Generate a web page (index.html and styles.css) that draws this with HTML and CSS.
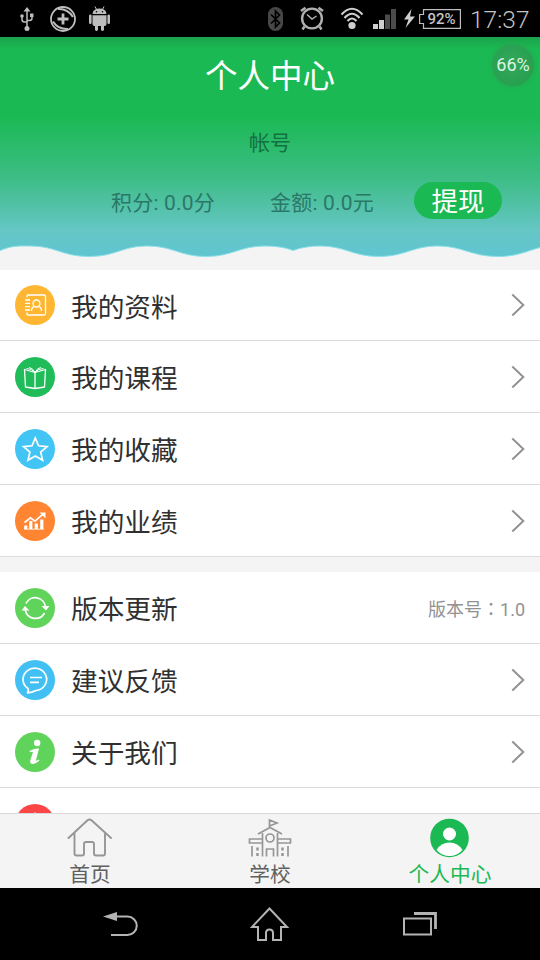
FILE: index.html
```
<!DOCTYPE html>
<html lang="zh-CN">
<head>
<meta charset="utf-8">
<title>个人中心</title>
<link rel="stylesheet" href="styles.css">
</head>
<body>
<div class="screen">
  <div class="status">
    <svg class="usb" width="14" height="24" viewBox="0 0 14 24" fill="none" stroke="#bdbdbd" stroke-width="1.5"><path d="M7 3v18M2 9v3.500Q2 15 4.500 15H7M12 8v3Q12 13.500 9.500 13.500H7"/><path d="M7 0l3.500 4.500h-7z" fill="#bdbdbd" stroke="none"/><circle cx="7" cy="21.500" r="2.500" fill="#bdbdbd" stroke="none"/><circle cx="2" cy="9" r="1.800" fill="#bdbdbd" stroke="none"/><path d="M10 6.500h3.500V10H10z" fill="#bdbdbd" stroke="none"/></svg>
    <svg class="plus" width="26" height="26" viewBox="0 0 26 26" fill="none" stroke="#bdbdbd"><circle cx="13" cy="13" r="12" stroke-width="1.800"/><path d="M8 3Q18 2.500 23 11M3 15.500Q8 23.500 18 23" stroke-width="2"/><path d="M13 7.500v11M7.500 13h11" stroke-width="2.800"/></svg>
    <svg class="droid" width="21" height="25" viewBox="0 0 21 25" fill="#bdbdbd"><path d="M3.500 8Q4 2.500 10.500 2.500T17.500 8zM3.500 9.200h14V18Q17.500 20 15.500 20H5.500Q3.500 20 3.500 18z"/><path d="M6 .5l1.500 3M15 .5l-1.500 3" stroke="#bdbdbd"/><rect x="0" y="8.500" width="2.600" height="9.500" rx="1.300"/><rect x="18.400" y="8.500" width="2.600" height="9.500" rx="1.300"/><rect x="6" y="18" width="3" height="7" rx="1.400"/><rect x="12" y="18" width="3" height="7" rx="1.400"/><circle cx="7.500" cy="5.700" r=".8" fill="#000"/><circle cx="13.500" cy="5.700" r=".8" fill="#000"/></svg>
    <svg class="bt" width="15" height="24" viewBox="0 0 15 24"><rect width="15" height="24" rx="7.500" fill="#474747"/><path d="M3 7.500l8.500 8.500-4 4V4l4 4L3 16.500" fill="none" stroke="#000" stroke-width="1.700"/></svg>
    <svg class="alarm" width="24" height="25" viewBox="0 0 24 25" fill="none" stroke="#b0b0b0"><circle cx="12" cy="12.500" r="9.900" stroke-width="2.400"/><path d="M7 8.500l5 4.500 4.500-3" stroke-width="1.500"/><path d="M1 5L5.500 1.800M18.500 1.800L23 5M4.500 20.500l-2 3M19.500 20.500l2 3" stroke-width="2.500"/></svg>
    <svg class="wifi" width="24" height="23" viewBox="0 0 24 23" fill="none" stroke="#cfcfcf" stroke-width="2.200"><path d="M1.500 7.500Q12-4 22.500 7.500M4.500 11Q12 2.500 19.500 11M7.500 14Q12 9 16.500 14"/><circle cx="12" cy="18.500" r="3.600" fill="#cfcfcf" stroke="none"/></svg>
    <svg class="signal" width="24" height="20" viewBox="0 0 24 20"><path d="M0 15h5v5H0zM6 11h5v9H6z" fill="#cfcfcf"/><path d="M12 5.500h5V20h-5zM18 0h5v20h-5z" fill="#4b4b4b"/></svg>
    <svg class="bolt" width="11" height="19" viewBox="0 0 11 19" fill="#cfcfcf"><path d="M7.500 0L0 10.500h4.500L1.500 19 11 7.500H6z"/></svg>
    <div class="battery"><svg width="42" height="20" viewBox="0 0 42 20" fill="none" stroke="#bdbdbd" stroke-width="1.200"><path d="M4.500.6h36.900v18.800H4.500V14.500H.6v-9h3.900z"/></svg><span>92%</span></div>
    <span class="clock">17:37</span>
  </div>

  <div class="header">
    <h1>个人中心</h1>
    <div class="account">帐号</div>
    <div class="stats">
      <span class="points">积分: 0.0分</span>
      <span class="amount">金额: 0.0元</span>
      <span class="withdraw">提现</span>
    </div>
    <svg class="wave" width="540" height="26" viewBox="0 0 540 26"><path d="M-2 7.500C12 1 20 2 30 2C56 2 62 12.500 89 12.500S122 2 147 2C173 2 180 12.500 206 12.500S240 2 265 2Q282 2 293 6.500Q305 2 320 2C345 2 353 12.500 379 12.500S413 2 437 2C463 2 471 12.500 498 12.500C518 12.500 526 7 542 3V28H-2z" fill="#f4f4f4" stroke="#8be0e8" stroke-width="1"/></svg>
    <div class="bubble">66%</div>
  </div>

  <div class="list">
    <div class="row first">
      <svg class="ico" viewBox="0 0 40 40" fill="none" stroke="#fff"><circle cx="20" cy="20" r="20" fill="#ffb733" stroke="none"/><g stroke-width="1.300"><path d="M12 12.500v-1.500q0-1 1-1h16q1.500 0 1.500 1.500v17q0 1.500-1.500 1.500H13q-1 0-1-1v-1.500M10 15h5M10 18.300h5M10 21.600h5M10 25h5"/><circle cx="21.500" cy="18.500" r="3.500"/><path d="M16.500 26q0-4 3-4.700M26.500 26q0-4-3-4.700"/></g></svg>
      <span class="label">我的资料</span><svg class="arrow" viewBox="0 0 14 24"><path d="M1.300 1.500L12.300 12 1.300 22.500"/></svg>
    </div>
    <div class="row">
      <svg class="ico" viewBox="0 0 40 40" fill="none" stroke="#fff"><circle cx="20" cy="20" r="20" fill="#1fbc59" stroke="none"/><g stroke-width="1.300" stroke-linejoin="round"><path d="M20 15.500v16M20 15.500l-10.500-3 1 17.500L20 31.500l9.500-1.500 1-17.500z"/><path d="M20 15.500Q16.500 11.500 11.500 11.500M20 15.500Q17.500 10.500 14 10.500M20 15.500Q23.500 11.500 28.500 11.500M20 15.500Q22.500 10.500 26 10.500" stroke-width="1"/></g></svg>
      <span class="label">我的课程</span><svg class="arrow" viewBox="0 0 14 24"><path d="M1.300 1.500L12.300 12 1.300 22.500"/></svg>
    </div>
    <div class="row">
      <svg class="ico" viewBox="0 0 40 40"><circle cx="20" cy="20" r="20" fill="#42c5f5"/><path d="M20.300 9l3.300 7.800 8.400.8-6.300 5.500 1.900 8.200-7.300-4.300-7.300 4.300 1.900-8.200-6.300-5.500 8.400-.8z" fill="none" stroke="#fff" stroke-width="1.700"/></svg>
      <span class="label">我的收藏</span><svg class="arrow" viewBox="0 0 14 24"><path d="M1.300 1.500L12.300 12 1.300 22.500"/></svg>
    </div>
    <div class="row">
      <svg class="ico" viewBox="0 0 40 40" fill="none" stroke="#fff"><circle cx="20" cy="20" r="20" fill="#ff8533" stroke="none"/><path d="M9.500 21.500l6-4.700 4.500 3.400 8-7" stroke-width="1.700"/><path d="M24.500 11.500h6v6z" fill="#fff" stroke="none"/><path d="M10.800 28v-3.500M15.800 28v-8M21.300 28v-5.500M26.800 28V18.500" stroke-width="3.200"/><path d="M9 28.200h20" stroke-width=".8"/></svg>
      <span class="label">我的业绩</span><svg class="arrow" viewBox="0 0 14 24"><path d="M1.300 1.500L12.300 12 1.300 22.500"/></svg>
    </div>
  </div>

  <div class="list more">
    <div class="row">
      <svg class="ico" viewBox="0 0 40 40" fill="none" stroke="#fff" stroke-width="1.700"><circle cx="20" cy="20" r="20" fill="#5fd35a" stroke="none"/><path d="M11 15.500A10.300 10.300 0 0 1 30.500 19M29.500 25A10.300 10.300 0 0 1 10.300 22"/><path d="M26.500 18H34.500L31 22.500zM6.500 22.500l3.500-4.500 4.500 4.500z" fill="#fff" stroke="none"/></svg>
      <span class="label">版本更新</span><span class="version">版本号<span class="colon" lang="zh-TW">：</span>1.0</span>
    </div>
    <div class="row">
      <svg class="ico" viewBox="0 0 40 40" fill="none" stroke="#fff" stroke-width="1.700"><circle cx="20" cy="20" r="20" fill="#42c0f4" stroke="none"/><path d="M13 28.500A11.800 11.200 0 1 1 21 30.500Q17 32.500 12.500 33Q14 30.500 13 28.500zM15 17.500h12M15 22.300h9" stroke-linejoin="round"/></svg>
      <span class="label">建议反馈</span><svg class="arrow" viewBox="0 0 14 24"><path d="M1.300 1.500L12.300 12 1.300 22.500"/></svg>
    </div>
    <div class="row">
      <svg class="ico" viewBox="0 0 40 40"><circle cx="20" cy="20" r="20" fill="#5fd35a"/><circle cx="22.200" cy="11" r="3.200" fill="#fff"/><path d="M14.500 19Q19 16 24 16.500L21 28Q20.800 29.500 23.800 27.500L24.500 28.500Q20 32.500 17 32Q14.500 31.500 15.400 28L17.800 20.500Q18.300 19 15 20.200z" fill="#fff"/></svg>
      <span class="label">关于我们</span><svg class="arrow" viewBox="0 0 14 24"><path d="M1.300 1.500L12.300 12 1.300 22.500"/></svg>
    </div>
    <div class="row">
      <svg class="ico" viewBox="0 0 40 40" fill="none" stroke="#fff" stroke-width="1.600"><circle cx="20" cy="20" r="20" fill="#fa4646" stroke="none"/><path d="M20 8.500v11M14 12a10 10 0 1 0 12 0"/></svg>
    </div>
  </div>

  <div class="tabs">
    <div class="tab">
      <svg width="46" height="40" viewBox="0 0 46 40" fill="none" stroke="#969696" stroke-width="1.900" stroke-linecap="round" stroke-linejoin="round"><path d="M1.500 20L20.500 2.300Q22.500.8 24.500 2.300L44 20M7.500 15v20.500q0 2 2 2h5.500q2 0 2-2V26q0-2 2-2h6q2 0 2 2v9.500q0 2 2 2h7q2 0 2-2V15"/></svg>
      <span>首页</span>
    </div>
    <div class="tab">
      <svg width="46" height="40" viewBox="0 0 46 40" fill="none" stroke="#969696" stroke-width="1.700"><path d="M22.500 10V2l7.500 3-7.500 3M11 16L23 9.500 35 16M15.500 15v23.500M30.500 15v23.500M15.500 21h-13v4h13M30.500 21h13v4h-13M5 28v10.500M41 28v10.500M19.500 38.500V31h7v7.500"/><circle cx="23" cy="20" r="4"/><path d="M10.500 29.500v9M35.500 29.500v9" stroke-width="2.500" stroke-dasharray="3 2.500"/></svg>
      <span>学校</span>
    </div>
    <div class="tab active">
      <svg width="46" height="40" viewBox="0 0 46 40"><circle cx="22.500" cy="20" r="19.300" fill="#1ab953"/><circle cx="22.500" cy="16" r="6.500" fill="#fff"/><path d="M9.500 32Q14 24.500 22.500 24.500T35.500 32Q30 38 22.500 38T9.500 32z" fill="#fff"/></svg>
      <span>个人中心</span>
    </div>
  </div>

  <div class="nav">
    <svg width="36" height="36" viewBox="0 0 36 36" fill="none" stroke="#b4b4b4" stroke-width="2"><path d="M13 10.500h12.500a9 9 0 0 1 0 18.500H9"/><path d="M1 10.500L15 6v9z" fill="#b4b4b4" stroke="none"/></svg>
    <svg width="40" height="36" viewBox="0 0 40 36" fill="none" stroke="#b4b4b4" stroke-width="2"><path d="M19.500 2.500L2 21h6v13h8v-7q0-3.500 3.500-3.500t3.500 3.500v7h8V21h6z"/></svg>
    <svg width="36" height="36" viewBox="0 0 36 36" fill="none" stroke="#b4b4b4" stroke-width="2"><path d="M2 12.500h27v16H2z"/><path d="M12 7.500h21.500V23" stroke-width="2.800"/></svg>
  </div>
</div>
</body>
</html>
```
FILE: styles.css
```
* { box-sizing: border-box; }
body {
  margin: 0;
  background: #000;
  font-family: Roboto, "Noto Sans CJK SC", sans-serif;
}
.screen {
  width: 540px;
  height: 960px;
  display: flex;
  flex-direction: column;
  overflow: hidden;
  background: #f4f4f4;
}

.status {
  height: 37px;
  flex: none;
  display: flex;
  align-items: center;
  background: #000;
  color: #c4c4c4;
}
.status svg { flex: none; }
.usb { margin-left: 20px; }
.plus { margin-left: 16px; }
.droid { margin-left: 13px; }
.bt { margin-left: 158px; }
.alarm { margin-left: 17px; }
.wifi { margin-left: 16px; }
.signal { margin-left: 9px; }
.bolt { margin-left: 7px; }
.battery {
  width: 42px;
  height: 20px;
  margin-left: 4px;
  display: grid;
}
.battery > * { grid-area: 1 / 1; }
.battery span {
  padding-left: 3px;
  text-align: center;
  font-size: 15px;
  font-weight: 500;
  line-height: 20px;
}
.clock {
  padding-top: 2px;
  margin-left: 9px;
  font-size: 24.500px;
  font-weight: 300;
  line-height: 37px;
}

.header {
  position: relative;
  height: 233px;
  flex: none;
  display: flex;
  flex-direction: column;
  background: linear-gradient(#1ca34d 0, #1ab953 12px, #1ab953 78px, #3cbd84 140px, #66c6c6 194px, #5fc5d0 219px);
}
h1 {
  height: 78px;
  margin: 0;
  text-align: center;
  font-size: 32.500px;
  font-weight: 400;
  line-height: 81px;
  color: #fff;
}
.account {
  height: 54px;
  text-align: center;
  font-size: 21px;
  line-height: 56px;
  color: #137040;
}
.stats {
  display: flex;
  align-items: center;
  height: 63px;
  font-size: 21px;
  letter-spacing: 0.2px;
  color: #2b7767;
}
.points { width: 159px; margin-left: 111px; }
.amount { width: 144px; }
.withdraw {
  width: 88px;
  height: 37px;
  border-radius: 19px;
  background: #1ab953;
  color: #fff;
  font-size: 26.500px;
  line-height: 39px;
  letter-spacing: 0;
  text-align: center;
}
.wave {
  display: block;
  margin-top: auto;
  flex: none;
  overflow: hidden;
}
.bubble {
  position: absolute;
  top: 7px;
  right: 6px;
  width: 42px;
  height: 42px;
  border-radius: 50%;
  background: radial-gradient(circle at 45% 45%, #32a75b, #239d4b);
  box-shadow: 0 0 2px 2px rgba(40, 170, 82, .6);
  color: #dcf5e3;
  font-size: 18px;
  line-height: 42px;
  text-align: center;
}

.list { flex: none; background: #fff; }
.more {
  flex: 1 1 0;
  min-height: 0;
  margin-top: 15px;
  overflow: hidden;
}
.row {
  height: 72px;
  display: flex;
  align-items: center;
  padding: 0 15px;
  border-bottom: 1px solid #dcdcdc;
}
.first { height: 71px; }
.ico { width: 40px; height: 40px; flex: none; }
.label {
  flex: 1;
  padding-top: 5px;
  margin-left: 16px;
  font-size: 26.700px;
  line-height: 40px;
  color: #303030;
}
.arrow {
  width: 14px;
  height: 24px;
  fill: none;
  stroke: #929292;
  stroke-width: 2;
}
.version { font-size: 18px; color: #929292; }
.colon { font-family: "Noto Sans CJK TC", sans-serif; }

.tabs {
  height: 75px;
  flex: none;
  display: flex;
  border-top: 1px solid #d8d8d8;
  background: #f4f4f4;
}
.tab {
  flex: 1;
  display: flex;
  flex-direction: column;
  align-items: center;
  padding-top: 4px;
  font-size: 20.700px;
  line-height: 34px;
  color: #606060;
}
.tab svg { flex: none; }
.active { color: #1ab953; }

.nav {
  height: 72px;
  flex: none;
  display: flex;
  align-items: center;
  justify-content: space-between;
  padding: 0 102px;
  background: #000;
}
```
